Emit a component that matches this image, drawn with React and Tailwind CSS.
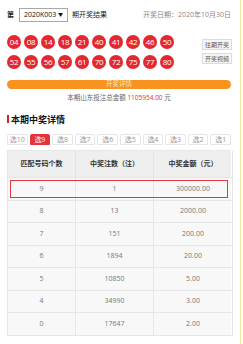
const row1 = ['04', '08', '14', '18', '21', '40', '41', '42', '46', '50']
const row2 = ['52', '55', '56', '57', '61', '70', '72', '75', '77', '80']
const tabs = ['选10', '选9', '选8', '选7', '选6', '选5', '选4', '选3', '选2', '选1']
const prizes = [
  ['9', '1', '300000.00'],
  ['8', '13', '2000.00'],
  ['7', '151', '200.00'],
  ['6', '1894', '20.00'],
  ['5', '10850', '5.00'],
  ['4', '34990', '3.00'],
  ['0', '17647', '2.00'],
]

function Ball({ n }) {
  return (
    <span className="w-[14px] h-[14px] rounded-full bg-[#e3282f] text-white text-[8px] leading-none flex items-center justify-center tracking-[-0.3px]">
      {n}
    </span>
  )
}

function SmallBtn({ children }) {
  return (
    <span className="w-[30px] h-[11px] border border-[#dcdcdc] bg-[#f6f6f6] text-[#555] text-[6px] leading-none flex items-center justify-center">
      {children}
    </span>
  )
}

export default function App() {
  return (
    <div
      className="w-[241px] h-[344px] bg-white border-r border-[#f3e6a8] pt-[8px] pl-[7px] pr-[9px] text-[#333]"
      style={{ fontFamily: '"Open Sans", "Noto Sans CJK SC", sans-serif' }}
    >
      {/* top line */}
      <div className="h-[14px] flex items-center text-[7px]">
        <span className="font-bold text-[#222]">第</span>
        <span className="ml-[5px] w-[49px] h-[14px] border border-[#a9a9a9] flex items-center justify-between px-[4px] text-[#111]">
          <span>2020K003</span>
          <span className="text-[5px]">▼</span>
        </span>
        <span className="ml-[4px] text-[#222]">期开奖结果</span>
        <span className="ml-auto text-[#888]">开奖日期：2020年10月30日</span>
      </div>

      {/* balls */}
      <div className="mt-[13px] flex justify-between">
        <div className="flex flex-col gap-[6px]">
          <div className="flex gap-[3px]">
            {row1.map((n) => <Ball key={n} n={n} />)}
          </div>
          <div className="flex gap-[3px]">
            {row2.map((n) => <Ball key={n} n={n} />)}
          </div>
        </div>
        <div className="mt-[4px] mr-[-1px] flex flex-col gap-[3px]">
          <SmallBtn>往期开奖</SmallBtn>
          <SmallBtn>开奖视频</SmallBtn>
        </div>
      </div>

      <div className="mt-[11px] h-[9px] rounded-full bg-[#f7931e] text-[#fde9c8] text-[6.5px] leading-none flex items-center justify-center">
        开奖详情
      </div>

      <div className="mt-[4px] h-[10px] text-[6.5px] leading-[10px] text-[#666] text-center">
        本期山东投注总金额 <span className="text-[#d9303a]">1105954.00</span> 元
      </div>

      {/* section title */}
      <div className="mt-[10px] h-[12px] flex items-center gap-[2px]">
        <span className="w-[2px] h-[8px] bg-[#c8262c]" />
        <span className="text-[9px] font-bold text-[#111] leading-none">本期中奖详情</span>
      </div>

      {/* tabs */}
      <div className="mt-[9px] grid grid-cols-10 gap-[2px]">
        {tabs.map((t, i) => (
          <span
            key={t}
            className={
              i === 1
                ? 'h-[11px] rounded-t-[2px] bg-[#e8323a] border border-[#e8323a] text-white text-[7px] leading-none flex items-center justify-center'
                : 'h-[11px] rounded-t-[2px] bg-white border border-[#e6e6e6] text-[#999] text-[7px] leading-none flex items-center justify-center'
            }
          >
            {t}
          </span>
        ))}
      </div>

      {/* table */}
      <div className="mt-[5px] border-l border-t border-[#e6e6e6] text-[7px]">
        <div className="grid grid-cols-[68px_78px_79px] h-[27px] bg-[#efefef] font-bold text-[#333]">
          <span className="border-r border-b border-[#e3e3e3] flex items-center justify-center">匹配号码个数</span>
          <span className="border-r border-b border-[#e3e3e3] flex items-center justify-center">中奖注数（注）</span>
          <span className="border-r border-b border-[#e3e3e3] flex items-center justify-center">中奖金额（元）</span>
        </div>
        {prizes.map((r, i) => (
          <div key={r[0]} className="relative grid grid-cols-[68px_78px_79px] h-[22.5px] bg-[#f8f8f8] text-[#777]">
            {r.map((c, j) => (
              <span key={j} className="border-r border-b border-[#e6e6e6] flex items-center justify-center">
                {c}
              </span>
            ))}
            {i === 0 && (
              <span className="absolute left-[2px] right-[3px] top-[2px] bottom-[3px] border-[1.5px] border-[#e0393f] pointer-events-none" />
            )}
          </div>
        ))}
      </div>
    </div>
  )
}
